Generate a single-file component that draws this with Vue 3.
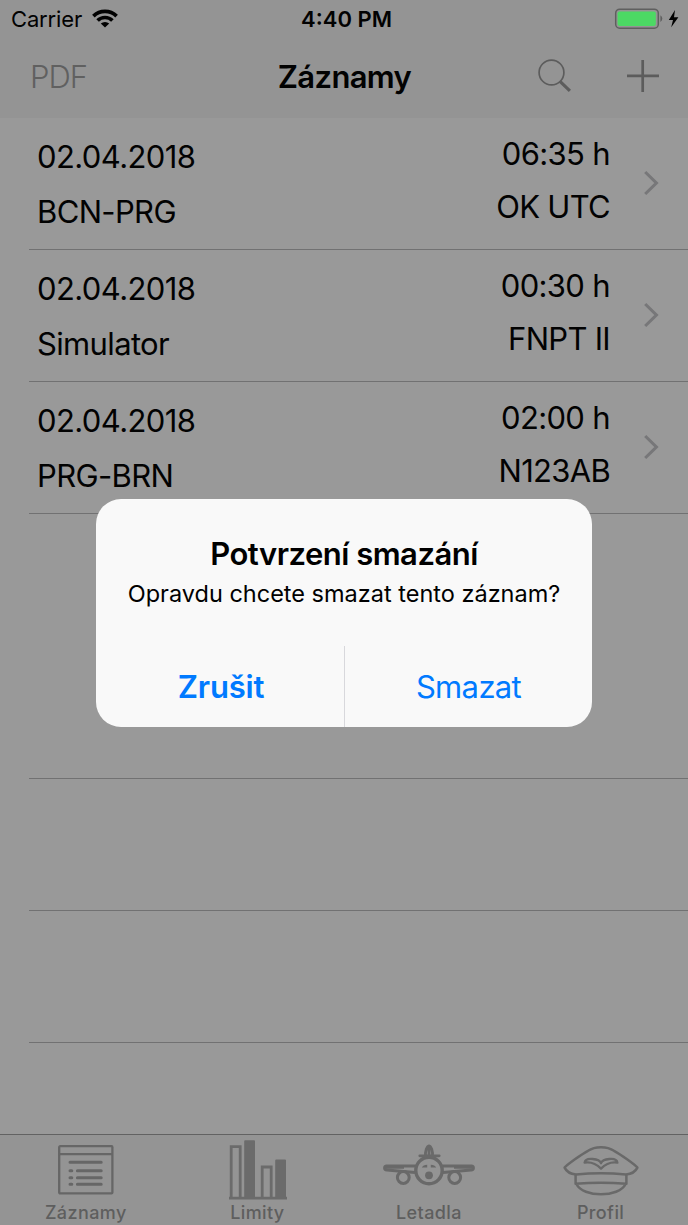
<script setup>
const records = [
  { date: '02.04.2018', route: 'BCN-PRG', time: '06:35 h', plane: 'OK UTC' },
  { date: '02.04.2018', route: 'Simulator', time: '00:30 h', plane: 'FNPT II' },
  { date: '02.04.2018', route: 'PRG-BRN', time: '02:00 h', plane: 'N123AB' },
]
const emptyRows = 4
</script>

<template>
  <div class="screen">
    <header class="top">
      <div class="status">
        <div class="carrier">
          <span>Carrier</span>
          <svg width="26" height="19" viewBox="0 0 26 19">
            <g fill="none" stroke="#020202" stroke-width="3.7">
              <path d="M1.4 7.1 A16.6 16.6 0 0 1 24.6 7.1" />
              <path d="M5.6 11.5 A10.6 10.6 0 0 1 20.4 11.5" />
            </g>
            <path d="M13 18.6 L8.8 14.6 A6 6 0 0 1 17.2 14.6 Z" fill="#020202" />
          </svg>
        </div>
        <div class="clock">4:40 PM</div>
        <div class="power">
          <svg width="66" height="22" viewBox="0 0 66 22">
            <rect x="1.7" y="1.2" width="42.6" height="19" rx="4" fill="none" stroke="#5f5f5f" stroke-width="1.5" />
            <rect x="3.6" y="3.5" width="38.2" height="14.4" rx="1.8" fill="#4cd964" />
            <path d="M46.4 7.2 a4 4 0 0 1 0 6.8 z" fill="#5f5f5f" />
            <path d="M61 2 L54.8 12 H59 L57.2 19.2 L64.4 9.2 H60 Z" fill="#020202" />
          </svg>
        </div>
      </div>
      <nav class="nav">
        <span class="pdf">PDF</span>
        <h1>Záznamy</h1>
        <div class="actions">
          <svg width="34" height="34" viewBox="0 0 34 34" fill="none" stroke="#5c5c5c">
            <circle cx="13.5" cy="13.5" r="12.4" stroke-width="1.7" />
            <path d="M22 22.4 L31.9 31.8" stroke-width="3.2" />
          </svg>
          <svg width="32" height="32" viewBox="0 0 32 32" stroke="#5c5c5c" stroke-width="2.7">
            <path d="M15.7 0 V32 M0 15.8 H32" />
          </svg>
        </div>
      </nav>
    </header>

    <main class="list">
      <div v-for="r in records" :key="r.route" class="row">
        <div class="left">
          <div class="date">{{ r.date }}</div>
          <div class="route">{{ r.route }}</div>
        </div>
        <div class="right">
          <div class="time">{{ r.time }}</div>
          <div class="plane">{{ r.plane }}</div>
        </div>
        <svg class="chevron" width="16" height="26" viewBox="0 0 16 26">
          <path d="M2.2 2 L13.4 13 L2.2 24" fill="none" stroke="#777779" stroke-width="3.1" />
        </svg>
      </div>
      <div v-for="n in emptyRows" :key="n" class="row" :class="{ plain: n === 1 }"></div>
    </main>

    <footer class="tabs">
      <div class="tab records">
        <svg width="56" height="50" viewBox="0 0 56 50" fill="none" stroke="#666">
          <rect x="1.2" y="1.2" width="53.2" height="47.2" rx="1" stroke-width="2.3" />
          <path d="M1 9.2 H54" stroke-width="2.3" />
          <path d="M12 17.2 H43.2 M12 25.8 H13.8 M19.4 25.8 H43.2 M12 32.8 H13.8 M19.4 32.8 H43.2 M12 39.2 H13.8 M19.4 39.2 H43.2" stroke-width="3" stroke-linecap="round" />
        </svg>
        <span>Záznamy</span>
      </div>
      <div class="tab limits">
        <svg width="60" height="60" viewBox="0 0 60 60">
          <g fill="none" stroke="#6b6b6b" stroke-width="2.8">
            <path d="M3.2 58 V6.6 H12.2 V58 M34.2 58 V27 H43.2 V58" />
            <path d="M1 58.2 H59" />
          </g>
          <path d="M16.2 59 V1.2 Q16.2 0.2 17.2 0.2 H26 Q27 0.2 27 1.2 V59 Z M47.2 59 V20.4 Q47.2 19.4 48.2 19.4 H57 Q58 19.4 58 20.4 V59 Z" fill="#6b6b6b" />
        </svg>
        <span>Limity</span>
      </div>
      <div class="tab planes">
        <svg width="94" height="42" viewBox="0 0 94 42" fill="none" stroke="#696969" stroke-width="3" stroke-linejoin="round">
          <path d="M33.5 22 H4.5 Q2.6 22 2.6 24 Q2.6 25.8 5 26 L33 28.6 M60.5 22 H89.5 Q91.4 22 91.4 24 Q91.4 25.8 89 26 L61 28.6" />
          <path d="M4 23.6 H22 M72 23.6 H90" stroke-width="2.4" />
          <circle cx="47" cy="26.5" r="13.2" stroke-width="3.4" />
          <path d="M43.6 13 C42.8 7 45 2.2 47 1.8 C49 2.2 51.2 7 50.4 13 M47 5 V12 M37.8 11.8 H57.2" stroke-width="2.8" stroke-linecap="round" />
          <circle cx="47" cy="31.3" r="3.9" fill="#696969" stroke="none" />
          <path d="M39.8 23.4 Q41 21 45.2 20.7 V23.4 Z M54.2 23.4 Q53 21 48.8 20.7 V23.4 Z" fill="#696969" stroke="none" />
          <circle cx="21.3" cy="33.5" r="5.9" />
          <circle cx="72.7" cy="33.5" r="5.9" />
        </svg>
        <span>Letadla</span>
      </div>
      <div class="tab profile">
        <svg width="76" height="52" viewBox="0 0 76 52" fill="none" stroke="#696969" stroke-width="2.5" stroke-linejoin="round">
          <path d="M13 29.6 C7.5 29 3.5 26.5 1.6 22.6 C4 19.5 19 9 25 5.8 C32 1 44 1 51 5.8 C57 9 72 19.5 74.4 22.6 C72.5 26.5 68.5 29 63 29.6 C48 28 28 28 13 29.6 Z" />
          <path d="M12.6 29.8 V38.8 C29 37.6 47 37.6 63.4 38.8 V29.8 M13.4 39 C20 52.8 56 52.8 62.6 39" />
          <path d="M21.6 17.6 C22.2 14.2 25.5 13.6 29.6 14 C33.5 14.3 37 15.5 38 18.2 C39 15.5 42.5 14.3 46.4 14 C50.5 13.6 53.8 14.2 54.4 17.6 C48.5 16.6 43.5 18 38 23.6 C32.5 18 27.5 16.6 21.6 17.6 Z" stroke-width="2.3" />
        </svg>
        <span>Profil</span>
      </div>
    </footer>

    <div class="dialog">
      <div class="message">
        <h2>Potvrzení smazání</h2>
        <p>Opravdu chcete smazat tento záznam?</p>
      </div>
      <div class="buttons">
        <button class="cancel">Zrušit</button>
        <button class="confirm">Smazat</button>
      </div>
    </div>
  </div>
</template>

<style>
body { margin: 0; background: #999; }
</style>

<style scoped>
.screen {
  position: relative;
  width: 688px;
  height: 1225px;
  overflow: hidden;
  display: flex;
  flex-direction: column;
  background: #999;
  color: #020202;
  font-family: Inter, "Liberation Sans", sans-serif;
  font-size: 31px;
}
h1, h2, p { margin: 0; }
svg { display: block; flex: none; }
.top { height: 118px; flex: none; background: #949494; }
.status {
  height: 38px;
  display: grid;
  grid-template-columns: 1fr auto 1fr;
  align-items: center;
  font-size: 22px;
}
.carrier { display: flex; align-items: center; gap: 10px; padding-left: 11px; letter-spacing: -0.15px; }
.carrier svg { margin-top: -2px; }
.clock { font-weight: 600; letter-spacing: 0; font-size: 22px; margin-left: 5px; }
.power { display: flex; justify-content: flex-end; padding-right: 8px; }
.nav {
  height: 80px;
  display: grid;
  grid-template-columns: 1fr auto 1fr;
  align-items: center;
  padding: 0 29px 0 30px;
}
.pdf { color: #606060; font-size: 31px; font-weight: 300; letter-spacing: -1px; margin-top: -3px; }
h1 { font-size: 31px; font-weight: 600; letter-spacing: -0.65px; margin-top: -3px; }
.actions { display: flex; justify-content: flex-end; align-items: center; gap: 55px; margin-top: -4px; }
.list { flex: 1; min-height: 0; overflow: hidden; margin-top: -0.5px; }
.row {
  box-sizing: border-box;
  height: 132.2px;
  margin-left: 29px;
  padding: 0 29px 0 8px;
  border-bottom: 1px solid #717172;
  display: flex;
}
.plain { height: 132.7px; border-bottom-color: transparent; }
.left { flex: 1; padding-top: 11px; line-height: 55px; }
.right { padding-top: 9px; line-height: 53px; text-align: right; margin-right: 33px; }
.date { letter-spacing: -0.6px; }
.route { letter-spacing: -0.65px; }
.time { letter-spacing: -0.65px; }
.plane { letter-spacing: -0.7px; }
.chevron { align-self: center; }
.tabs {
  height: 91px;
  box-sizing: border-box;
  flex: none;
  display: grid;
  grid-template-columns: repeat(4, 171.6px);
  border-top: 1px solid #626262;
  background: #949494;
}
.tab { display: flex; flex-direction: column; align-items: center; justify-content: space-between; color: #5e5e5e; font-size: 18px; font-weight: 500; letter-spacing: 0.4px; }
.tab span { line-height: 22px; margin-bottom: 1px; }
.records svg { margin: 10px 0 0 1px; }
.limits svg { margin: 5px 0 0 2px; }
.planes svg { margin-top: 9px; }
.profile svg { margin-top: 10px; }
.dialog {
  position: absolute;
  left: 96px;
  top: 499px;
  width: 496px;
  height: 228px;
  border-radius: 25px;
  overflow: hidden;
  background: #f9f9f9;
  display: flex;
  flex-direction: column;
}
.message { height: 147px; box-sizing: border-box; padding-top: 35px; text-align: center; }
h2 { font-size: 31px; line-height: 40px; font-weight: 600; letter-spacing: -0.5px; color: #000; }
p { font-size: 23.5px; line-height: 39px; letter-spacing: 0; color: #000; white-space: nowrap; }
.buttons { flex: 1; display: grid; grid-template-columns: 1fr 1fr; }
button {
  border: 0;
  padding: 0;
  background: none;
  color: #007aff;
  font-family: inherit;
  font-size: 31px;
}
.cancel { font-weight: 600; letter-spacing: -0.2px; padding-left: 2px; }
.confirm { border-left: 1px solid #d8d8dc; letter-spacing: -0.65px; }
</style>
